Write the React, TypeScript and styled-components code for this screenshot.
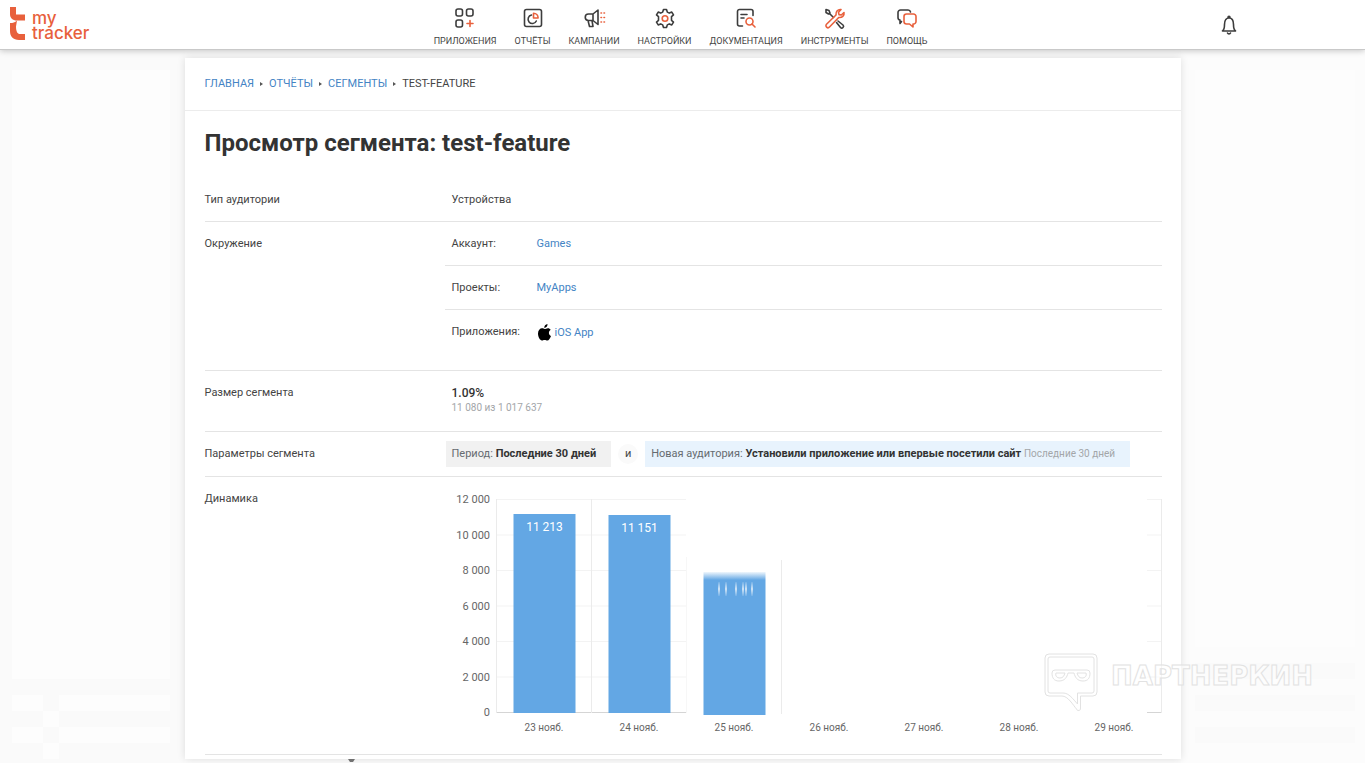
import React from "react";
import styled, { createGlobalStyle, css } from "styled-components";

const LINK = "#4484c4";
const INK = "#333333";
const TEXT = "#444444";
const ACCENT = "#e8603c";
const LINE = "#e4e4e4";

const GlobalStyle = createGlobalStyle`
  * { box-sizing: border-box; }
  body {
    margin: 0;
    background: #fbfbfb;
    color: ${TEXT};
    font-family: Roboto, "Liberation Sans", sans-serif;
    font-size: 11px;
    line-height: 18px;
  }
`;

const Page = styled.div`
  position: relative;
  min-height: 100vh;
  overflow: hidden;
`;

const Header = styled.header`
  position: relative;
  z-index: 2;
  display: grid;
  grid-template-columns: 1fr auto 1fr;
  height: 50px;
  padding: 0 128px 0 8px;
  background: #ffffff;
  border-bottom: 1px solid #c9c9c9;
  box-shadow: 0 1px 6px rgba(0, 0, 0, 0.22);
`;

const Logo = styled.a`
  display: flex;
  gap: 6px;
  padding-top: 6px;
  color: ${ACCENT};
  font-family: Inter, Roboto, sans-serif;
  font-size: 17px;
  font-weight: 500;
  line-height: 15px;
  text-decoration: none;
`;

const LogoText = styled.span`
  padding-top: 5px;
`;

const Nav = styled.nav`
  display: flex;
  gap: 18px;
  padding-left: 116px;
`;

const NavItem = styled.a`
  display: flex;
  flex-direction: column;
  align-items: center;
  gap: 4px;
  padding-top: 7px;
  color: ${TEXT};
  font-size: 9px;
  line-height: 12px;
  text-decoration: none;
  text-transform: uppercase;
`;

const Icon = styled.svg`
  display: block;
  flex: none;
  fill: none;
  stroke: #3d3d3d;
  stroke-width: 1.6;
  stroke-linecap: round;
  stroke-linejoin: round;
`;

const BellButton = styled.button`
  justify-self: end;
  align-self: center;
  padding: 0;
  border: 0;
  background: none;
  cursor: pointer;
`;

const Columns = styled.div`
  display: grid;
  grid-template-columns: minmax(12px, 1fr) minmax(0, 996px) minmax(12px, 1fr);
`;

const Side = styled.aside<{ $right?: boolean }>`
  display: flex;
  flex-direction: column;
  gap: 16px;
  padding: ${(p) => (p.$right ? "20px 10px 0 14px" : "20px 15px 0 12px")};
  background: ${(p) => (p.$right ? "#fcfcfc" : "#fafafa")};
`;

const Tall = styled.div<{ $right?: boolean }>`
  height: ${(p) => (p.$right ? "577px" : "609px")};
  background: #fdfdfd;
`;

const Band = styled.div`
  height: 16px;
  background: #fafafa;
`;

const SplitBands = styled.div`
  display: grid;
  grid-template-columns: 31px 16px 1fr;
  grid-auto-rows: 16px;
`;

const Cell = styled.div<{ $on?: boolean }>`
  background: ${(p) => (p.$on ? "#fdfdfd" : "transparent")};
`;

const Card = styled.main`
  position: relative;
  z-index: 1;
  margin-top: 8px;
  background: #ffffff;
  box-shadow: 0 0 8px rgba(0, 0, 0, 0.12);
`;

const Breadcrumbs = styled.nav`
  display: flex;
  align-items: center;
  gap: 6px;
  height: 53px;
  padding: 0 19px 0 20px;
  border-bottom: 1px solid #ececec;
  text-transform: uppercase;
`;

const Link = styled.a`
  color: ${LINK};
  text-decoration: none;
`;

const Arrow = styled.span`
  width: 0;
  border: 2px solid transparent;
  border-left: 3px solid #555;
  border-right: 0;
`;

const Title = styled.h1`
  margin: 0;
  padding: 16px 19px 19px 20px;
  color: ${INK};
  font-size: 24px;
  font-weight: 700;
  line-height: 32px;
`;

const Details = styled.dl`
  margin: 0;
  padding: 0 19px 4px 20px;
`;

const Row = styled.div<{ $height: number }>`
  display: grid;
  grid-template-columns: 240px minmax(0, 1fr);
  min-height: ${(p) => p.$height}px;
  border-bottom: 1px solid ${LINE};
`;

const Label = styled.dt`
  padding-top: 13px;
`;

const Value = styled.dd<{ $flush?: boolean }>`
  margin: 0;
  padding: ${(p) => (p.$flush ? "0" : "13px 0 0 7px")};
`;

const SubRow = styled.div`
  display: grid;
  grid-template-columns: 85px 1fr;
  align-items: start;
  min-height: 44px;
  padding: 13px 0 0 7px;
  border-bottom: 1px solid ${LINE};
  &:last-child { border-bottom: 0; }
`;

const AppLink = styled(Link)`
  display: flex;
  align-items: center;
  gap: 4px;
  padding: 1px 0 0 1px;
`;

const Share = styled.strong`
  display: block;
  color: ${INK};
  font-size: 12px;
  font-weight: 500;
  line-height: 18px;
`;

const Muted = styled.span`
  color: #a3a6a9;
  font-size: 10px;
  line-height: 12px;
`;

const MutedLine = styled(Muted)`
  display: block;
`;

const Chips = styled.div`
  display: flex;
  align-items: center;
  gap: 7px;
  padding: 9px 0 0 1px;
`;

const Chip = styled.span<{ $blue?: boolean }>`
  padding: 4px 15px 4px 6px;
  white-space: nowrap;
  color: #666b70;
  background: ${(p) => (p.$blue ? "#e8f3fd" : "#f1f1f1")};
  strong { color: ${INK}; font-weight: 700; }
`;

const Joiner = styled.span`
  width: 20px;
  border-radius: 10px;
  background: #fafafa;
  line-height: 20px;
  text-align: center;
`;

const ChartSvg = styled.svg`
  display: block;
  width: 100%;
  height: auto;
  font-size: 10px;
  fill: #666;
`;

const Tail = styled.div`
  display: flex;
  height: 4px;
  padding-left: 163px;
  background: #fbfbfb;
`;

const Watermark = styled.div`
  position: absolute;
  z-index: 2;
  right: 51px;
  top: 650px;
  pointer-events: none;
`;

const outlined = css`
  fill: #ffffff;
  fill-opacity: 0.5;
  stroke: #e2e2e2;
`;

const WatermarkSvg = styled.svg`
  display: block;
  ${outlined}
  font-family: "DejaVu Sans", Inter, sans-serif;
  font-size: 26px;
  font-weight: 700;
`;

const navItems: { label: string; art: React.ReactNode }[] = [
  {
    label: "Приложения",
    art: (
      <>
        <rect x="3" y="2" width="6.5" height="7" rx="2" />
        <rect x="13.5" y="2" width="6.5" height="7" rx="2" />
        <rect x="3" y="13" width="6.5" height="7" rx="2" />
        <path stroke={ACCENT} d="M17 13.5v6M14 16.5h6" />
      </>
    ),
  },
  {
    label: "Отчёты",
    art: (
      <>
        <rect x="3.5" y="2.5" width="17" height="17" rx="2" />
        <path d="M10.5 8a4.3 4.3 0 1 0 4.8 6" />
        <path stroke={ACCENT} d="M12.5 6.2v4.8h4.6a4.8 4.8 0 0 0-4.6-4.8Z" />
      </>
    ),
  },
  {
    label: "Кампании",
    art: (
      <>
        <path d="M11 7H6.5a3 3 0 0 0 0 6.5H11l5 4V3ZM11 7V13.500M6 13.500l1.5 6h3.500L10 13.500" />
        <path stroke={ACCENT} d="M19 6h.5M22 6h.5M19 10.500h.5M22 10.500h.5M19 15h.5M22 15h.5" />
      </>
    ),
  },
  {
    label: "Настройки",
    art: (
      <>
        <path d="M10.5 2.500h3l.8 2.6 2 1 2.5-1 1.7 2.800-2 1.800v3.600l2 1.800-1.700 2.800-2.500-1-2 1-.8 2.600h-3l-.8-2.600-2-1-2.500 1-1.700-2.800 2-1.800v-3.600l-2-1.800 1.700-2.800 2.500 1 2-1Z" />
        <circle stroke={ACCENT} cx="12" cy="11.500" r="2.8" />
      </>
    ),
  },
  {
    label: "Документация",
    art: (
      <>
        <path d="M8.5 19H5.5a2 2 0 0 1-2-2V4.500a2 2 0 0 1 2-2H17a2 2 0 0 1 2 2v4M7 7.500h6M7 11h3" />
        <circle stroke={ACCENT} cx="15.5" cy="14.5" r="3.5" />
        <path stroke={ACCENT} d="M18 17l3 3" />
      </>
    ),
  },
  {
    label: "Инструменты",
    art: (
      <>
        <path d="M3 2.500l3 1 1 2.5-1.5 1L3 5.500ZM6.5 6.500l4 4M15 14l5 4a1.5 1.5 0 0 1-2.5 2.5l-4-5" />
        <path stroke={ACCENT} d="M13 8c-.5-3.5 2-6 5-5.500L15.5 5.300l.5 2.3 2.3.4L21 5.500c.6 3-2 5.500-5.300 5L6.5 20A2 2 0 0 1 3.5 17.200Z" />
      </>
    ),
  },
  {
    label: "Помощь",
    art: (
      <>
        <path d="M6.5 14.5L5 16.5V13a2.5 2.5 0 0 1-2-2.5V5.500a2.5 2.5 0 0 1 2.5-2.5H13A2.5 2.5 0 0 1 15.5 5" />
        <path stroke={ACCENT} d="M11.5 7h7A2.5 2.5 0 0 1 21 9.5v5a2.5 2.5 0 0 1-2.5 2.5H18v3l-3.5-3h-3A2.5 2.5 0 0 1 9 14.5v-5A2.5 2.5 0 0 1 11.5 7Z" />
      </>
    ),
  },
];

const ticks = ["12 000", "10 000", "8 000", "6 000", "4 000", "2 000", "0"];
const days = [23, 24, 25, 26, 27, 28, 29];

function Chart() {
  return (
    <ChartSvg viewBox="0 0 717 277" role="img" aria-label="Динамика">
      <defs>
        <linearGradient id="rise" x1="0" y1="0" x2="0" y2="1">
          <stop offset="0" stopColor="#63a7e4" stopOpacity="0.1" />
          <stop offset="1" stopColor="#63a7e4" />
        </linearGradient>
        <linearGradient id="streak" x1="0" y1="0" x2="0" y2="1">
          <stop offset="0" stopColor="#ffffff" stopOpacity="0.1" />
          <stop offset="0.5" stopColor="#ffffff" stopOpacity="0.7" />
          <stop offset="1" stopColor="#ffffff" stopOpacity="0.1" />
        </linearGradient>
      </defs>
      <g>
        {ticks.map((t, i) => (
          <path key={t} d={`M51 ${22.5 + i * 35.5}H241M702 ${22.5 + i * 35.5}H717`} stroke={i === 6 ? "#d5d5d5" : "#f3f3f3"} />
        ))}
        <path stroke="#ebebeb" d="M51.5 22V236M146.5 22V236M336.5 83V237M716.5 22V236" />
        <path stroke="#f7f7f7" d="M241.5 80V236" />
      </g>
      {ticks.map((t, i) => (
        <text key={t} x="45" y={26 + i * 35.5} textAnchor="end" fontSize="11">{t}</text>
      ))}
      {days.map((d, i) => (
        <text key={d} x={99 + i * 95} y="254" textAnchor="middle">{d} нояб.</text>
      ))}
      <g fill="#63a7e4">
        <rect x="68.5" y="37" width="62" height="199" />
        <rect x="163.5" y="38" width="62" height="198" />
        <rect x="258.5" y="103" width="62" height="135" />
        <rect x="258.5" y="95" width="62" height="8" fill="url(#rise)" />
      </g>
      <g fill="#ffffff" fontSize="12" textAnchor="middle">
        <text x="99.5" y="54">11 213</text>
        <text x="194.5" y="55">11 151</text>
      </g>
      <g fill="url(#streak)">
        {[273, 280, 290, 297, 300, 306].map((x) => (
          <rect key={x} x={x} y="105" width="2" height="14" />
        ))}
      </g>
    </ChartSvg>
  );
}

export default function App() {
  return (
    <Page>
      <GlobalStyle />
      <Header>
        <Logo href="#" aria-label="my tracker">
          <svg width="18" height="36" viewBox="0 0 18 36" fill={ACCENT}>
            <path d="M2 1h6v7.5h9v6H9C4.5 14.5 2 12 2 8Z" />
            <path d="M2 17c3 0 5-.5 7-2.5L8 20.5c0 5 1.5 7.5 4 7.5h5v6h-6c-6 0-9-3.5-9-9Z" />
          </svg>
          <LogoText>my<br />tracker</LogoText>
        </Logo>
        <Nav>
          {navItems.map((n) => (
            <NavItem href="#" key={n.label}>
              <Icon width="24" height="24" viewBox="0 0 24 24" aria-hidden="true">{n.art}</Icon>
              {n.label}
            </NavItem>
          ))}
        </Nav>
        <BellButton aria-label="Уведомления">
          <Icon width="16" height="20" viewBox="0 0 16 20" aria-hidden="true">
            <path d="M1.5 16c2-1.5 2-3 2-6.5C3.5 5 5.5 3 8 3s4.5 2 4.5 6.5c0 3.5 0 5 2 6.5ZM7 2.5C7 1 9 1 9 2.5M6.5 18c.5 1.2 2.5 1.2 3 0" />
          </Icon>
        </BellButton>
      </Header>

      <Columns>
        <Side>
          <Tall />
          <SplitBands>
            <Cell $on /><Cell /><Cell $on />
            <Cell /><Cell $on /><Cell />
            <Cell $on /><Cell /><Cell $on />
            <Cell /><Cell $on /><Cell />
          </SplitBands>
        </Side>
        <div>
          <Card>
            <Breadcrumbs>
              <Link href="#">Главная</Link>
              <Arrow />
              <Link href="#">Отчёты</Link>
              <Arrow />
              <Link href="#">Сегменты</Link>
              <Arrow />
              <span>test-feature</span>
            </Breadcrumbs>
            <Title>Просмотр сегмента: test-feature</Title>
            <Details>
              <Row $height={44}>
                <Label>Тип аудитории</Label>
                <Value>Устройства</Value>
              </Row>
              <Row $height={149}>
                <Label>Окружение</Label>
                <Value $flush>
                  <SubRow><span>Аккаунт:</span><Link href="#">Games</Link></SubRow>
                  <SubRow><span>Проекты:</span><Link href="#">MyApps</Link></SubRow>
                  <SubRow>
                    <span>Приложения:</span>
                    <AppLink href="#">
                      <svg width="13" height="18" viewBox="0 0 13 18" fill="#000" aria-hidden="true">
                        <path d="M9.5 0c.2 2-1.3 3.8-3.2 3.9C6.1 2 7.6.3 9.5 0ZM6.7 5c.8 0 1.7-.8 3.2-.8 1.2 0 2.2.6 2.8 1.5-2.6 1.6-2.2 5.1.3 6.3-.7 2-2.1 4.6-3.7 4.6-1 0-1.4-.7-2.7-.7s-1.7.7-2.7.7C2 16.6 0 12.9 0 9.6c0-3.4 2-5.3 4-5.3 1.2 0 2 .7 2.7.7Z" />
                      </svg>
                      iOS App
                    </AppLink>
                  </SubRow>
                </Value>
              </Row>
              <Row $height={61}>
                <Label>Размер сегмента</Label>
                <Value>
                  <Share>1.09%</Share>
                  <MutedLine>11 080 из 1 017 637</MutedLine>
                </Value>
              </Row>
              <Row $height={45}>
                <Label>Параметры сегмента</Label>
                <Value $flush>
                  <Chips>
                    <Chip>Период: <strong>Последние 30 дней</strong></Chip>
                    <Joiner>и</Joiner>
                    <Chip $blue>
                      Новая аудитория: <strong>Установили приложение или впервые посетили сайт</strong>{" "}
                      <Muted>Последние 30 дней</Muted>
                    </Chip>
                  </Chips>
                </Value>
              </Row>
              <Row $height={278}>
                <Label>Динамика</Label>
                <Value $flush><Chart /></Value>
              </Row>
            </Details>
          </Card>
          <Tail>
            <svg width="7" height="4" viewBox="0 0 7 4" fill="#777" aria-hidden="true"><path d="M0 0h7L5 3H2Z" /></svg>
          </Tail>
        </div>
        <Side $right>
          <Tall $right />
          <Band /><Band /><Band />
        </Side>
      </Columns>

      <Watermark>
        <WatermarkSvg width="270" height="64" viewBox="0 0 270 64">
          <path fillRule="evenodd" d="M5 4H49a4 4 0 0 1 4 4V42a4 4 0 0 1-4 4H36.5V58a2 2 0 0 1-4 1C29 55 24 46 18 46H5a4 4 0 0 1-4-4V8a4 4 0 0 1 4-4ZM6 7a2 2 0 0 0-2 2V41a2 2 0 0 0 2 2H19c6 0 10 6 14.5 11V43H48a2 2 0 0 0 2-2V9a2 2 0 0 0-2-2Z" />
          <path fillRule="evenodd" d="M11 20H43a3 3 0 0 1 3 3c0 5-2 8-7 8-6 0-8-4-9-8H24c-1 4-3 8-9 8-5 0-7-3-7-8a3 3 0 0 1 3-3ZM12 23c-1 3 1 5 4 5s4-2 5-5ZM33 23c1 3 2 5 5 5s5-2 4-5Z" />
          <text x="67" y="35">ПАРТНЕРКИН</text>
        </WatermarkSvg>
      </Watermark>
    </Page>
  );
}
